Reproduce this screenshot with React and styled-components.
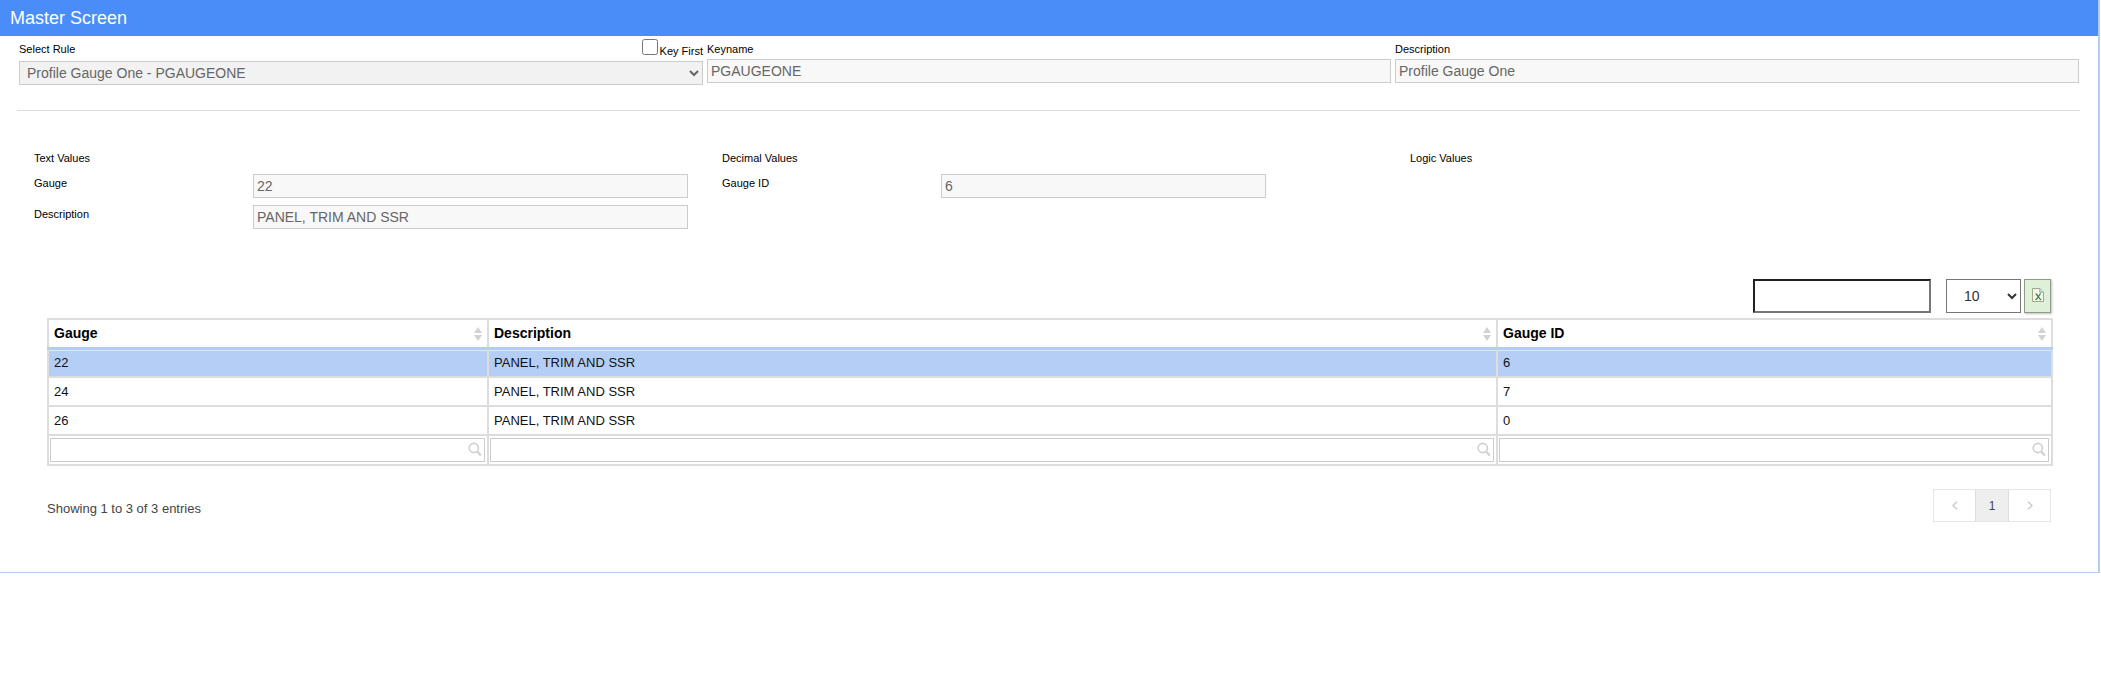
import React from "react";
import styled, { createGlobalStyle } from "styled-components";

const Global = createGlobalStyle`
  html, body { margin: 0; padding: 0; background: #fff; }
  body { font-family: "Liberation Sans", Arial, sans-serif; color: #000; }
  * { box-sizing: border-box; }
`;

const Panel = styled.div`
  width: 2100px;
  height: 573px;
  border-right: 2px solid #b3cdf5;
  border-bottom: 1px solid #b3cdf5;
`;

const TitleBar = styled.div`
  height: 36px;
  background: #4a8df8;
  color: #fff;
  font-size: 18px;
  line-height: 36px;
  padding-left: 10px;
`;

const TopRow = styled.div`
  display: grid;
  grid-template-columns: 684px 684px 684px;
  column-gap: 4px;
  padding: 3px 0 0 19px;
  height: 74px;
`;

const Field = styled.div`
  display: flex;
  flex-direction: column;
`;

const LabelRow = styled.div`
  display: flex;
  align-items: flex-start;
  justify-content: space-between;
  height: ${(p) => (p.$tall ? "22px" : "20px")};
`;

const SmallLabel = styled.label`
  font-size: 11px;
  line-height: 13px;
  padding-top: 4px;
`;

const KeyFirst = styled.label`
  display: flex;
  align-items: flex-start;
  font-size: 11px;
  line-height: 13px;
`;

const KeyFirstText = styled.span`
  margin-top: 6px;
`;

const Check = styled.input`
  width: 16px;
  height: 16px;
  margin: 0 2px 0 0;
`;

const Input = styled.input`
  width: 100%;
  height: 24px;
  padding: 0 3px;
  border: 1.5px solid #ccc;
  background: #f8f8f8;
  color: #666;
  font-family: inherit;
  font-size: 14px;
`;

const RuleSelect = styled.select`
  width: 100%;
  height: 24px;
  padding: 0 3px;
  border: 1.5px solid #ccc;
  background-color: #f2f2f2;
  color: #666;
  opacity: 1;
  font-family: inherit;
  font-size: 14px;
`;

const Divider = styled.hr`
  margin: 0 18px 0 17px;
  border: 0;
  border-top: 1px solid #ddd;
`;

const ValuesGrid = styled.div`
  display: grid;
  grid-template-columns: 688px 688px 1fr;
  padding: 41px 0 0 34px;
  height: 168px;
`;

const ValueColumn = styled.div`
  display: flex;
  flex-direction: column;
`;

const GroupTitle = styled.div`
  font-size: 11px;
  line-height: 13px;
  height: 22px;
`;

const ValueRow = styled.div`
  display: grid;
  grid-template-columns: ${(p) => p.$labelWidth}px ${(p) => p.$inputWidth}px;
  height: 31px;
`;

const RowLabel = styled.div`
  font-size: 11px;
  line-height: 13px;
  padding-top: 3px;
`;

const Tools = styled.div`
  display: flex;
  justify-content: flex-end;
  align-items: stretch;
  height: 34px;
  margin-right: 47px;
`;

const SearchBox = styled.input`
  width: 178px;
  height: 34px;
  margin-right: 15px;
  border: 2px inset #767676;
  background: #fff;
`;

const PageSize = styled.select`
  width: 75px;
  height: 34px;
  margin-right: 3px;
  padding-left: 13px;
  border: 1px solid #767676;
  background: #fff;
  color: #333;
  font-family: inherit;
  font-size: 14px;
`;

const ExcelButton = styled.button`
  display: flex;
  align-items: center;
  justify-content: center;
  width: 27px;
  height: 34px;
  padding: 0 0 3px;
  border: 1px solid #8f9a8c;
  background: #dff0d8;
  box-shadow: 1px 1px 2px rgba(0, 0, 0, 0.25);
`;

const TableWrap = styled.div`
  margin: 5px 47px 0 47px;
`;

const Table = styled.table`
  width: 2004px;
  table-layout: fixed;
  border-collapse: collapse;
  border: 1px solid #ddd;
`;

const Th = styled.th`
  position: relative;
  height: 29px;
  padding: 0 5px;
  border: 2px solid #ddd;
  border-bottom: 3px solid #b3cdf5;
  background: #fff;
  text-align: left;
  font-size: 14px;
  font-weight: 700;
`;

const SortMark = styled.svg`
  position: absolute;
  right: 5px;
  top: 7px;
`;

const Td = styled.td`
  height: 29px;
  padding: 0 5px;
  border: 2px solid #ddd;
  background: ${(p) => (p.$selected ? "#b4cef6" : "#fff")};
  box-shadow: ${(p) => (p.$selected ? "inset 0 1px 0 #d9e6fb" : "none")};
  color: #111;
  font-size: 13px;
`;

const FilterCell = styled.td`
  height: 30px;
  padding: 2px 2.5px 2px 0.5px;
  border: 2px solid #ddd;
  border-top: 2px solid #b3cdf5;
`;

const FilterBox = styled.div`
  position: relative;
  height: 24px;
  border: 1px solid #ccc;
  background: #fff;
`;

const FilterIcon = styled.svg`
  position: absolute;
  right: 2px;
  top: 3px;
`;

const Footer = styled.div`
  display: flex;
  align-items: flex-start;
  justify-content: space-between;
  margin: 23px 47px 0;
`;

const Info = styled.div`
  font-size: 13px;
  line-height: 15px;
  margin-top: 12px;
  color: #444;
`;

const Pager = styled.div`
  display: flex;
  height: 33px;
  border: 1px solid #e6e6e6;
`;

const PageCell = styled.div`
  display: flex;
  align-items: center;
  justify-content: center;
  width: ${(p) => (p.$current ? "34px" : "41px")};
  background: ${(p) => (p.$current ? "#eee" : "#fff")};
  border-left: ${(p) => (p.$current ? "1px solid #ddd" : "0")};
  border-right: ${(p) => (p.$current ? "1px solid #ddd" : "0")};
  color: #444;
  font-size: 12px;
`;

const ExcelIcon = () => (
  <svg width="12" height="14" viewBox="0 0 13 15">
    <path d="M.5.5h8l4 4v10H.5z" fill="#f4f6ea" stroke="#9a9f7c" />
    <path d="M8.5.5v4h4" fill="#dfe6c8" stroke="#6aa5b5" />
    <path d="M3.5 6l2.6 3.6L3.2 13h1.7l2-2.4L8.8 13h1.7L7.5 9.4 10 6H8.4L6.9 8.2 5.2 6z" fill="#2c7a45" />
  </svg>
);

const SortIcon = () => (
  <SortMark width="8" height="14" viewBox="0 0 8 14">
    <path d="M4 0l4 6H0z" fill="#d2d2d2" />
    <path d="M4 14l4-6H0z" fill="#d2d2d2" />
  </SortMark>
);

const SearchIcon = () => (
  <FilterIcon width="14" height="15" viewBox="0 0 14 15">
    <circle cx="5.8" cy="6" r="4.6" fill="none" stroke="#d0d0d0" strokeWidth="1.6" />
    <path d="M9.2 9.6l3.6 4" stroke="#d0d0d0" strokeWidth="2.2" />
  </FilterIcon>
);

const Chevron = ({ flip }) => (
  <svg width="6" height="9" viewBox="0 0 6 9">
    <path d={flip ? "M1 .8l4 3.7-4 3.7" : "M5 .8L1 4.5l4 3.7"} fill="none" stroke="#ccc" strokeWidth="1.5" />
  </svg>
);

const rows = [
  { gauge: "22", description: "PANEL, TRIM AND SSR", id: "6", selected: true },
  { gauge: "24", description: "PANEL, TRIM AND SSR", id: "7" },
  { gauge: "26", description: "PANEL, TRIM AND SSR", id: "0" },
];

const columns = [
  { title: "Gauge", width: 440 },
  { title: "Description", width: 1009 },
  { title: "Gauge ID", width: 555 },
];

const App = () => {
  return (
    <Panel>
      <Global />
      <TitleBar>Master Screen</TitleBar>
      <TopRow>
        <Field>
          <LabelRow $tall>
            <SmallLabel>Select Rule</SmallLabel>
            <KeyFirst>
              <Check type="checkbox" />
              <KeyFirstText>Key First</KeyFirstText>
            </KeyFirst>
          </LabelRow>
          <RuleSelect disabled defaultValue="pg">
            <option value="pg">Profile Gauge One - PGAUGEONE</option>
          </RuleSelect>
        </Field>
        <Field>
          <LabelRow>
            <SmallLabel>Keyname</SmallLabel>
          </LabelRow>
          <Input readOnly value="PGAUGEONE" />
        </Field>
        <Field>
          <LabelRow>
            <SmallLabel>Description</SmallLabel>
          </LabelRow>
          <Input readOnly value="Profile Gauge One" />
        </Field>
      </TopRow>
      <Divider />
      <ValuesGrid>
        <ValueColumn>
          <GroupTitle>Text Values</GroupTitle>
          <ValueRow $labelWidth={219} $inputWidth={435}>
            <RowLabel>Gauge</RowLabel>
            <Input readOnly value="22" />
          </ValueRow>
          <ValueRow $labelWidth={219} $inputWidth={435}>
            <RowLabel>Description</RowLabel>
            <Input readOnly value="PANEL, TRIM AND SSR" />
          </ValueRow>
        </ValueColumn>
        <ValueColumn>
          <GroupTitle>Decimal Values</GroupTitle>
          <ValueRow $labelWidth={219} $inputWidth={325}>
            <RowLabel>Gauge ID</RowLabel>
            <Input readOnly value="6" />
          </ValueRow>
        </ValueColumn>
        <ValueColumn>
          <GroupTitle>Logic Values</GroupTitle>
        </ValueColumn>
      </ValuesGrid>
      <Tools>
        <SearchBox />
        <PageSize defaultValue="10">
          <option value="10">10</option>
        </PageSize>
        <ExcelButton>
          <ExcelIcon />
        </ExcelButton>
      </Tools>
      <TableWrap>
        <Table>
          <colgroup>
            {columns.map((c) => (
              <col key={c.title} width={c.width} />
            ))}
          </colgroup>
          <thead>
            <tr>
              {columns.map((c) => (
                <Th key={c.title}>
                  {c.title}
                  <SortIcon />
                </Th>
              ))}
            </tr>
          </thead>
          <tbody>
            {rows.map((r) => (
              <tr key={r.gauge}>
                <Td $selected={r.selected}>{r.gauge}</Td>
                <Td $selected={r.selected}>{r.description}</Td>
                <Td $selected={r.selected}>{r.id}</Td>
              </tr>
            ))}
          </tbody>
          <tfoot>
            <tr>
              {columns.map((c) => (
                <FilterCell key={c.title}>
                  <FilterBox>
                    <SearchIcon />
                  </FilterBox>
                </FilterCell>
              ))}
            </tr>
          </tfoot>
        </Table>
      </TableWrap>
      <Footer>
        <Info>Showing 1 to 3 of 3 entries</Info>
        <Pager>
          <PageCell>
            <Chevron />
          </PageCell>
          <PageCell $current>1</PageCell>
          <PageCell>
            <Chevron flip />
          </PageCell>
        </Pager>
      </Footer>
    </Panel>
  );
};

export default App;
